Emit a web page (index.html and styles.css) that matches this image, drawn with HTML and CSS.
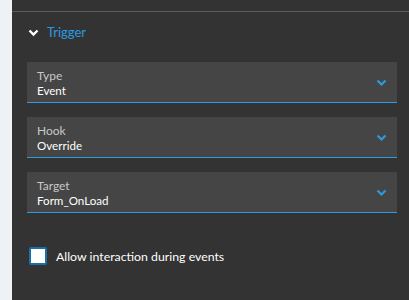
FILE: index.html
```html
<!DOCTYPE html>
<html>
<head>
  <meta charset="UTF-8">
  <title>Trigger</title>
  <link rel="stylesheet" href="styles.css">
</head>
<body>
  <div class="gutter"></div>
  <div class="panel">
    <div class="top-strip"></div>
    <div class="section-head">
      <svg class="head-chevron" width="11" height="8" viewBox="0 0 11 8"><path d="M1.5 1.5 L5.5 5.5 L9.5 1.5" fill="none" stroke="#fff" stroke-width="2.4"/></svg>
      <span class="section-title">Trigger</span>
    </div>
    <div class="fields">
      <div class="field">
        <div class="field-text">
          <span class="field-label">Type</span>
          <span class="field-value">Event</span>
        </div>
        <svg class="field-chevron" width="11" height="8" viewBox="0 0 11 8"><path d="M1.5 1.5 L5.5 5.5 L9.5 1.5" fill="none" stroke="#2b9be0" stroke-width="2.2"/></svg>
      </div>
      <div class="field">
        <div class="field-text">
          <span class="field-label">Hook</span>
          <span class="field-value">Override</span>
        </div>
        <svg class="field-chevron" width="11" height="8" viewBox="0 0 11 8"><path d="M1.5 1.5 L5.5 5.5 L9.5 1.5" fill="none" stroke="#2b9be0" stroke-width="2.2"/></svg>
      </div>
      <div class="field">
        <div class="field-text">
          <span class="field-label">Target</span>
          <span class="field-value">Form_OnLoad</span>
        </div>
        <svg class="field-chevron" width="11" height="8" viewBox="0 0 11 8"><path d="M1.5 1.5 L5.5 5.5 L9.5 1.5" fill="none" stroke="#2b9be0" stroke-width="2.2"/></svg>
      </div>
    </div>
    <label class="check-row">
      <span class="check-box"></span>
      <span class="check-text">Allow interaction during events</span>
    </label>
  </div>
</body>
</html>
```

FILE: styles.css
```css
html, body { margin: 0; height: 100%; }
body {
  display: flex;
  background: #333;
  font-family: Lato, "Open Sans", sans-serif;
  overflow: hidden;
}
.gutter { width: 12px; background: #eef2f5; flex: none; }
.panel { flex: 1; background: #333; }
.top-strip { height: 11px; border-bottom: 1px solid #5b5b5b; }
.section-head {
  display: flex;
  align-items: center;
  height: 40px;
  padding-left: 16px;
}
.head-chevron { margin-right: 8px; margin-top: 1px; }
.section-title { color: #2a9be0; font-size: 13px; }
.fields {
  display: flex;
  flex-direction: column;
  gap: 14px;
  margin: 10px 12px 0 15px;
}
.field {
  display: flex;
  align-items: center;
  height: 40px;
  background: #454545;
  border-bottom: 1px solid #2a9be0;
  padding: 0 10px;
}
.field-text { flex: 1; display: flex; flex-direction: column; padding-top: 2px; }
.field-label { color: #c8c8c8; font-size: 12px; line-height: 15px; }
.field-value { color: #fff; font-size: 11.6px; line-height: 15px; }
.field-chevron { margin-top: 2px; }
.check-row {
  display: flex;
  align-items: center;
  margin: 34px 0 0 17px;
}
.check-box {
  width: 14px;
  height: 14px;
  background: #fff;
  border: 2px solid #1c6ea6;
  border-radius: 2px;
  margin-right: 9px;
}
.check-text { color: #fff; font-size: 12.3px; }
```
